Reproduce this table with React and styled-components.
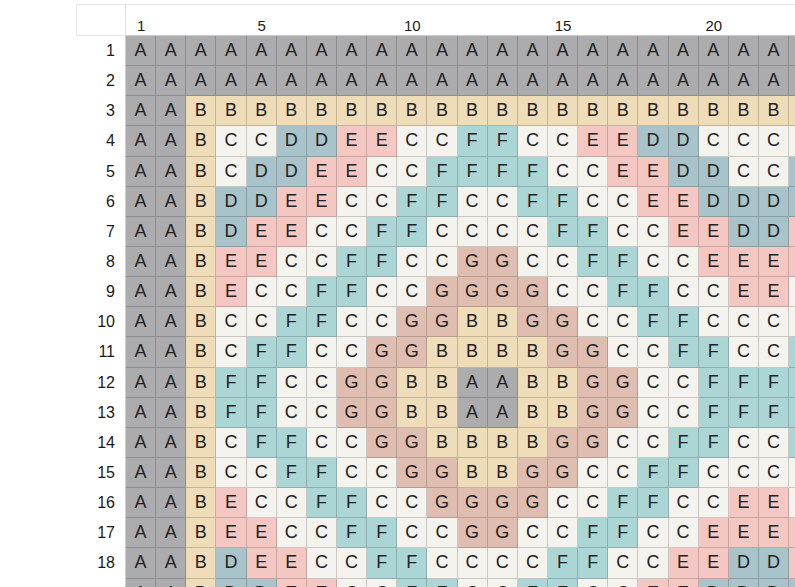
import React from 'react'
import styled, { createGlobalStyle } from 'styled-components'

const GlobalStyle = createGlobalStyle`
  html, body {
    margin: 0;
    padding: 0;
    background: #ffffff;
    overflow: hidden;
  }
  body {
    font-family: "Liberation Sans", Arial, sans-serif;
    color: #1f1f1f;
  }
`

const CELL = 30.15

const COLORS = {
  A: '#acacae',
  B: '#efdcb9',
  C: '#f5f3ee',
  D: '#a8c3c9',
  E: '#f4c7c3',
  F: '#acd5d6',
  G: '#dfbdb0',
}

// one string per row, one letter per column
const ROWS = [
  'AAAAAAAAAAAAAAAAAAAAAAA',
  'AAAAAAAAAAAAAAAAAAAAAAA',
  'AABBBBBBBBBBBBBBBBBBBBB',
  'AABCCDDEECCFFCCEEDDCCCC',
  'AABCDDEECCFFFFCCEEDDCCD',
  'AABDDEECCFFCCFFCCEEDDDD',
  'AABDEECCFFCCCCFFCCEEDDE',
  'AABEECCFFCCGGCCFFCCEEEE',
  'AABECCFFCCGGGGCCFFCCEEC',
  'AABCCFFCCGGBBGGCCFFCCCC',
  'AABCFFCCGGBBBBGGCCFFCCF',
  'AABFFCCGGBBAABBGGCCFFFF',
  'AABFFCCGGBBAABBGGCCFFFF',
  'AABCFFCCGGBBBBGGCCFFCCF',
  'AABCCFFCCGGBBGGCCFFCCCC',
  'AABECCFFCCGGGGCCFFCCEEC',
  'AABEECCFFCCGGCCFFCCEEEE',
  'AABDEECCFFCCCCFFCCEEDDE',
  'AABDDEECCFFCCFFCCEEDDDD',
]

const COLS = ROWS[0].length

const Page = styled.div`
  padding: 4px 0 0 76px;
`

const Sheet = styled.div`
  display: grid;
  grid-template-columns: 49px max-content;
  grid-template-rows: 31px max-content;
  width: max-content;
`

const Corner = styled.div`
  border-top: 1px solid #e6e6e6;
  border-left: 1px solid #e6e6e6;
`

const ColumnHeader = styled.div`
  display: grid;
  grid-template-columns: repeat(${COLS}, ${CELL}px);
  border-top: 1px solid #e6e6e6;
  border-left: 1px solid #e3e3e3;
`

const ColumnLabel = styled.div`
  display: flex;
  align-items: flex-end;
  justify-content: center;
  padding-bottom: 1px;
  font-size: 15px;
  line-height: 17px;
  color: #1a1a1a;
`

const RowHeader = styled.div`
  display: grid;
  grid-auto-rows: ${CELL}px;
  border-top: 1px solid #e6e6e6;
`

const RowLabel = styled.div`
  display: flex;
  align-items: center;
  justify-content: flex-end;
  padding-right: 10px;
  font-size: 16px;
  color: #1a1a1a;
`

const Board = styled.div`
  display: grid;
  grid-template-columns: repeat(${COLS}, ${CELL}px);
  grid-auto-rows: ${CELL}px;
  border-top: 1px solid rgba(0, 0, 0, 0.2);
  border-left: 1px solid rgba(0, 0, 0, 0.2);
`

const Cell = styled.div`
  box-sizing: border-box;
  display: flex;
  align-items: center;
  justify-content: center;
  background: ${p => COLORS[p.$kind]};
  border-right: 1px solid rgba(0, 0, 0, 0.18);
  border-bottom: 1px solid rgba(0, 0, 0, 0.18);
  font-size: 18px;
  color: #222;
`

const showLabel = n => n === 1 || n % 5 === 0

export default function App() {
  return (
    <>
      <GlobalStyle />
      <Page>
        <Sheet>
          <Corner />
          <ColumnHeader>
            {Array.from({ length: COLS }, (_, i) => (
              <ColumnLabel key={i}>{showLabel(i + 1) ? i + 1 : ''}</ColumnLabel>
            ))}
          </ColumnHeader>
          <RowHeader>
            {ROWS.map((_, i) => (
              <RowLabel key={i}>{i + 1}</RowLabel>
            ))}
          </RowHeader>
          <Board>
            {ROWS.map((row, r) =>
              row.split('').map((kind, c) => (
                <Cell key={r + '-' + c} $kind={kind}>{kind}</Cell>
              ))
            )}
          </Board>
        </Sheet>
      </Page>
    </>
  )
}
